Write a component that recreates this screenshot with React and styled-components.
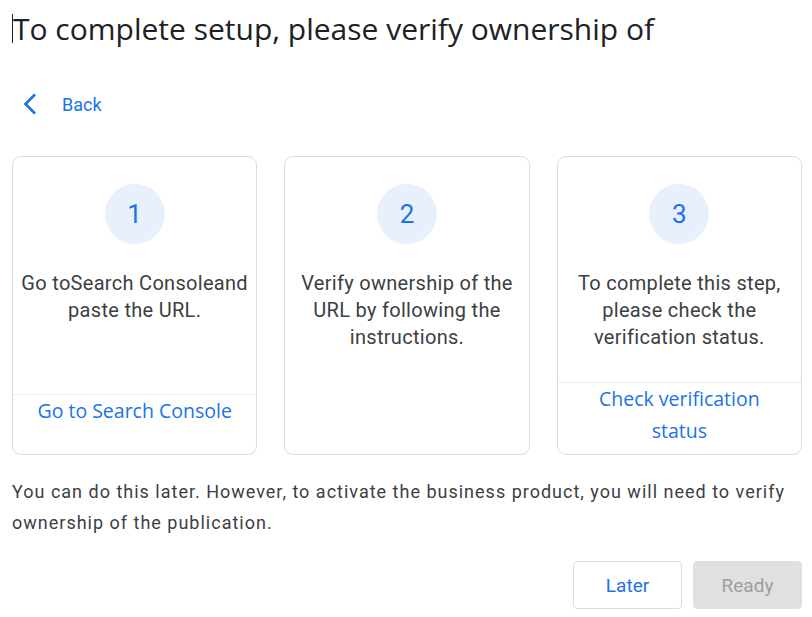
import styled, { createGlobalStyle } from 'styled-components';

const GlobalStyle = createGlobalStyle`
  body {
    margin: 0;
    background: #fff;
    font-family: Roboto, 'Liberation Sans', sans-serif;
  }
`;

const Page = styled.div`
  padding: 0 10px 0 12px;
  width: 812px;
  box-sizing: border-box;
`;

const Title = styled.h1`
  margin: 0;
  padding-top: 8px;
  height: 40px;
  display: flex;
  align-items: center;
  font-family: 'Open Sans', sans-serif;
  font-size: 30px;
  font-weight: 400;
  color: #202124;
  white-space: nowrap;
`;

const Caret = styled.span`
  display: inline-block;
  width: 1px;
  height: 29px;
  background: #202124;
`;

const BackLink = styled.a`
  display: flex;
  align-items: center;
  gap: 20px;
  margin: 44px 0 0 6px;
  height: 24px;
  color: #1a73e8;
  font-size: 18px;
  text-decoration: none;
`;

const Cards = styled.div`
  display: grid;
  grid-template-columns: repeat(3, 1fr);
  gap: 27px;
  margin-top: 40px;
`;

const Card = styled.div`
  display: flex;
  flex-direction: column;
  align-items: center;
  height: 299px;
  box-sizing: border-box;
  border: 1px solid #dadce0;
  border-radius: 9px;
  padding-top: 27px;
`;

const Step = styled.div`
  width: 60px;
  height: 60px;
  border-radius: 50%;
  background: #e8f0fe;
  color: #1a73e8;
  display: flex;
  align-items: center;
  justify-content: center;
  font-size: 26px;
`;

const CardText = styled.p`
  margin: 26px 0 0;
  padding: 0 6px;
  text-align: center;
  font-size: 20px;
  letter-spacing: 0.3px;
  line-height: 27px;
  color: #3c4043;
`;

const CardFooter = styled.div`
  margin-top: auto;
  align-self: stretch;
  border-top: 1px solid #eceef0;
  min-height: 52px;
  padding: 0 20px 7px;
  text-align: center;
  font-family: 'Open Sans', sans-serif;
  font-size: 19.5px;
  font-weight: 500;
  line-height: 32px;
  color: #1a73e8;
`;

const Note = styled.p`
  margin: 21px 0 0;
  font-size: 18px;
  line-height: 31px;
  letter-spacing: 1px;
  color: #3c4043;
`;

const Actions = styled.div`
  display: flex;
  justify-content: flex-end;
  gap: 11px;
  margin-top: 23px;
`;

const Button = styled.button`
  width: 109px;
  height: 48px;
  border-radius: 4px;
  font-family: Roboto, sans-serif;
  font-size: 19px;
  border: 1px solid ${({ disabled }) => (disabled ? '#e0e0e0' : '#dadce0')};
  background: ${({ disabled }) => (disabled ? '#e0e0e0' : '#fff')};
  color: ${({ disabled }) => (disabled ? '#9e9e9e' : '#1a73e8')};
`;

const steps = [
  { n: 1, text: 'Go toSearch Consoleand paste the URL.', link: 'Go to Search Console' },
  { n: 2, text: 'Verify ownership of the URL by following the instructions.' },
  { n: 3, text: 'To complete this step, please check the verification status.', link: 'Check verification status' },
];

export default function App() {
  return (
    <Page>
      <GlobalStyle />
      <Title>
        <Caret />
        To complete setup, please verify ownership of
      </Title>
      <BackLink href="#">
        <svg width="24" height="24" viewBox="0 0 24 24">
          <path d="M17 2.5 L7.5 12 L17 21.5" fill="none" stroke="#1a73e8" strokeWidth="2.6" />
        </svg>
        Back
      </BackLink>
      <Cards>
        {steps.map((s) => (
          <Card key={s.n}>
            <Step>{s.n}</Step>
            <CardText>{s.text}</CardText>
            {s.link && <CardFooter>{s.link}</CardFooter>}
          </Card>
        ))}
      </Cards>
      <Note>
        You can do this later. However, to activate the business product, you will need to verify
        ownership of the publication.
      </Note>
      <Actions>
        <Button>Later</Button>
        <Button disabled>Ready</Button>
      </Actions>
    </Page>
  );
}
